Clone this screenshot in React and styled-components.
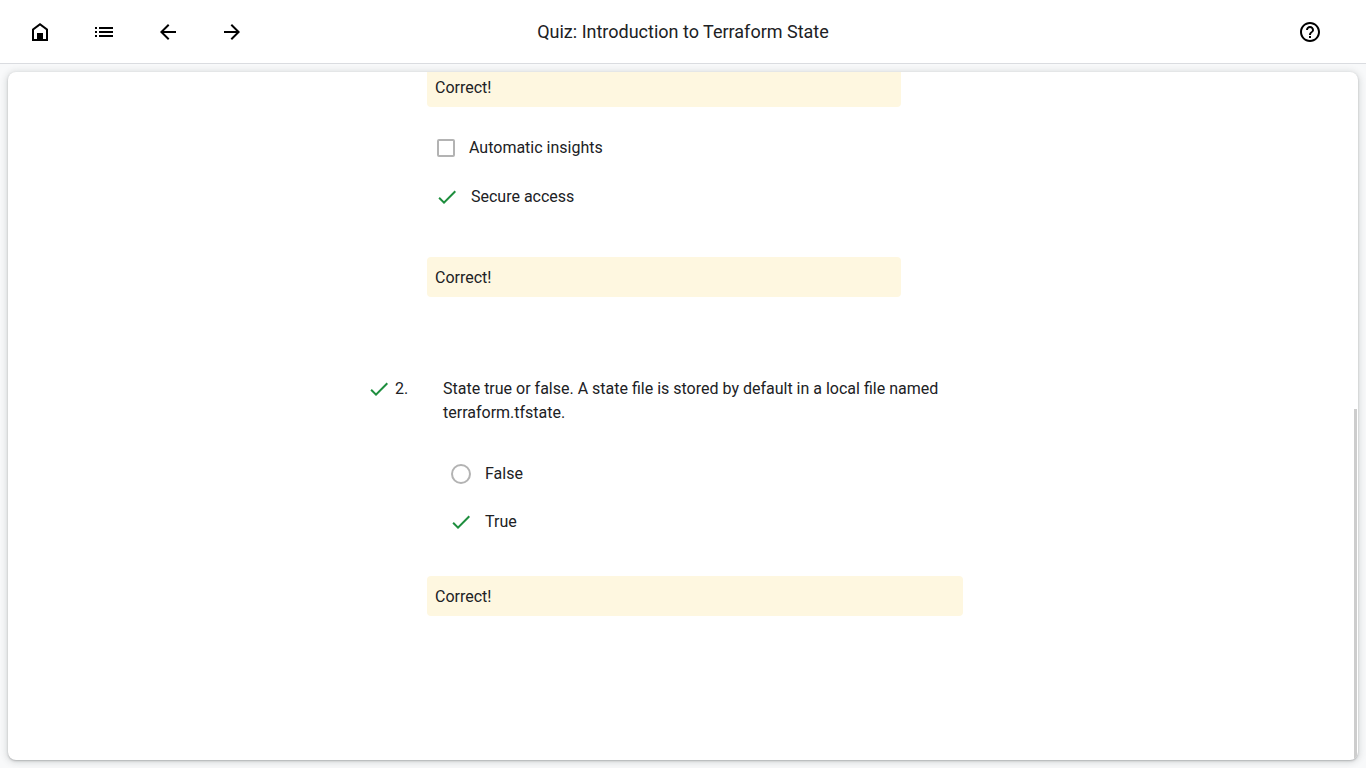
import React from "react";
import styled, { createGlobalStyle } from "styled-components";

const GlobalStyle = createGlobalStyle`
  *, *::before, *::after { box-sizing: border-box; }
  body {
    margin: 0;
    background: #f8f9fa;
    color: #202124;
    font: 400 16px/24px Roboto, "Liberation Sans", sans-serif;
  }
`;

const Page = styled.div`
  display: flex;
  flex-direction: column;
  height: 100vh;
`;

const Header = styled.header`
  display: grid;
  grid-template-columns: 1fr auto 1fr;
  align-items: center;
  flex: none;
  height: 64px;
  padding: 0 16px;
  background: #fff;
  border-bottom: 1px solid #dadce0;
`;

const Nav = styled.nav`
  display: flex;
  gap: 16px;
`;

const Actions = styled.div`
  display: flex;
  justify-content: flex-end;
  padding-right: 16px;
`;

const IconButton = styled.button`
  display: grid;
  place-items: center;
  width: 48px;
  height: 48px;
  padding: 0;
  border: 0;
  border-radius: 50%;
  background: none;
  color: #000;
  cursor: pointer;
`;

const Glyph = styled.svg`
  display: block;
  flex: none;
  width: 24px;
  height: 24px;
  fill: currentColor;
`;

const Title = styled.h1`
  margin: 0;
  font: 400 18px/24px "Google Sans", Roboto, sans-serif;
  white-space: nowrap;
`;

const Card = styled.main`
  position: relative;
  display: flex;
  flex: 1;
  flex-direction: column;
  justify-content: flex-end;
  min-height: 0;
  margin: 8px;
  padding-bottom: 144px;
  overflow: hidden;
  background: #fff;
  border-radius: 8px;
  box-shadow: 0 1px 2px rgba(60, 64, 67, 0.3), 0 1px 6px 2px rgba(60, 64, 67, 0.15);
`;

const ScrollThumb = styled.div`
  position: absolute;
  right: 1px;
  bottom: 0;
  width: 3px;
  height: 51%;
  background: #cdcdcd;
`;

const Quiz = styled.form`
  display: flex;
  flex: none;
  flex-direction: column;
  gap: 80px;
  width: 100%;
  max-width: 632px;
  margin: 0 auto;
`;

const Question = styled.section`
  padding: 0 36px 0 60px;
`;

const Prompt = styled.div`
  display: grid;
  grid-template-columns: 28px 48px 1fr;
  margin: 0 0 0 -60px;
`;

const PromptText = styled.p`
  margin: 0;
`;

const Options = styled.div`
  display: flex;
  flex-direction: column;
  padding: ${(p) => (p.$inset ? "25px 0 30px 22px" : "16px 0 36px 8px")};
`;

const Option = styled.label`
  display: flex;
  align-items: center;
  gap: ${(p) => p.$gap}px;
  height: ${(p) => p.$height}px;
`;

const Control = styled.span`
  display: grid;
  place-items: center;
  width: ${(p) => p.$size}px;
  height: 24px;

  > * { grid-area: 1 / 1; }
`;

const Choice = styled.input`
  appearance: none;
  width: ${(p) => (p.type === "radio" ? 20 : 18)}px;
  height: ${(p) => (p.type === "radio" ? 20 : 18)}px;
  margin: 0;
  border: 2px solid #b3b3b3;
  border-radius: ${(p) => (p.type === "radio" ? "50%" : "2px")};

  &:checked { border-color: transparent; }
`;

const Feedback = styled.p`
  width: ${(p) => (p.$narrow ? "474px" : "100%")};
  max-width: 100%;
  margin: 0;
  padding: 9px 8px 7px;
  background: #fef7e0;
  border-radius: 4px;
`;

const CheckGlyph = styled(Glyph)`
  color: #1e8e3e;
`;

const ICONS = {
  home: "M4 21V9l8-6 8 6v12zM6 19h3v-6h6v6h3v-9l-6-4.5L6 10z",
  list: "M3 13h2v-2H3v2zm0 4h2v-2H3v2zm0-8h2V7H3v2zm4 4h14v-2H7v2zm0 4h14v-2H7v2zM7 7v2h14V7H7z",
  back: "M20 11H7.83l5.59-5.59L12 4l-8 8 8 8 1.41-1.41L7.83 13H20v-2z",
  forward: "M12 4l-1.41 1.41L16.17 11H4v2h12.17l-5.58 5.59L12 20l8-8z",
  help: "M11 18h2v-2h-2v2zm1-16C6.48 2 2 6.48 2 12s4.48 10 10 10 10-4.48 10-10S17.52 2 12 2zm0 18c-4.41 0-8-3.59-8-8s3.59-8 8-8 8 3.59 8 8-3.59 8-8 8zm0-14c-2.21 0-4 1.79-4 4h2c0-1.1.9-2 2-2s2 .9 2 2c0 2-3 1.75-3 5h2c0-2.25 3-2.5 3-5 0-2.21-1.79-4-4-4z",
};

function IconAction({ icon, label }) {
  return (
    <IconButton type="button" aria-label={label}>
      <Glyph viewBox="0 0 24 24" aria-hidden="true">
        <path fillRule="evenodd" d={ICONS[icon]} />
      </Glyph>
    </IconButton>
  );
}

function Check() {
  return (
    <CheckGlyph viewBox="0 0 24 24" aria-hidden="true">
      <path d="M9 16.17L4.83 12l-1.42 1.41L9 19 21 7l-1.41-1.41z" />
    </CheckGlyph>
  );
}

function Answer({ type, name, correct, size = 24, gap = 12, height = 48, children }) {
  return (
    <Option $gap={gap} $height={height}>
      <Control $size={size}>
        <Choice type={type} name={name} defaultChecked={correct} />
        {correct && <Check />}
      </Control>
      {children}
    </Option>
  );
}

export default function App() {
  return (
    <>
      <GlobalStyle />
      <Page>
        <Header>
          <Nav aria-label="Course">
            <IconAction icon="home" label="Home" />
            <IconAction icon="list" label="Outline" />
            <IconAction icon="back" label="Previous" />
            <IconAction icon="forward" label="Next" />
          </Nav>
          <Title>Quiz: Introduction to Terraform State</Title>
          <Actions>
            <IconAction icon="help" label="Help" />
          </Actions>
        </Header>
        <Card>
          <Quiz>
            <Question>
              <Feedback $narrow>Correct!</Feedback>
              <Options>
                <Answer type="checkbox" name="insights" size={22} height={50}>
                  Automatic insights
                </Answer>
                <Answer type="checkbox" name="access" height={48} correct>
                  Secure access
                </Answer>
              </Options>
              <Feedback $narrow>Correct!</Feedback>
            </Question>
            <Question>
              <Prompt>
                <Check />
                <span>2.</span>
                <PromptText>
                  State true or false. A state file is stored by default in a local file named
                  terraform.tfstate.
                </PromptText>
              </Prompt>
              <Options $inset>
                <Answer type="radio" name="q2">False</Answer>
                <Answer type="radio" name="q2" correct>True</Answer>
              </Options>
              <Feedback>Correct!</Feedback>
            </Question>
          </Quiz>
          <ScrollThumb />
        </Card>
      </Page>
    </>
  );
}
